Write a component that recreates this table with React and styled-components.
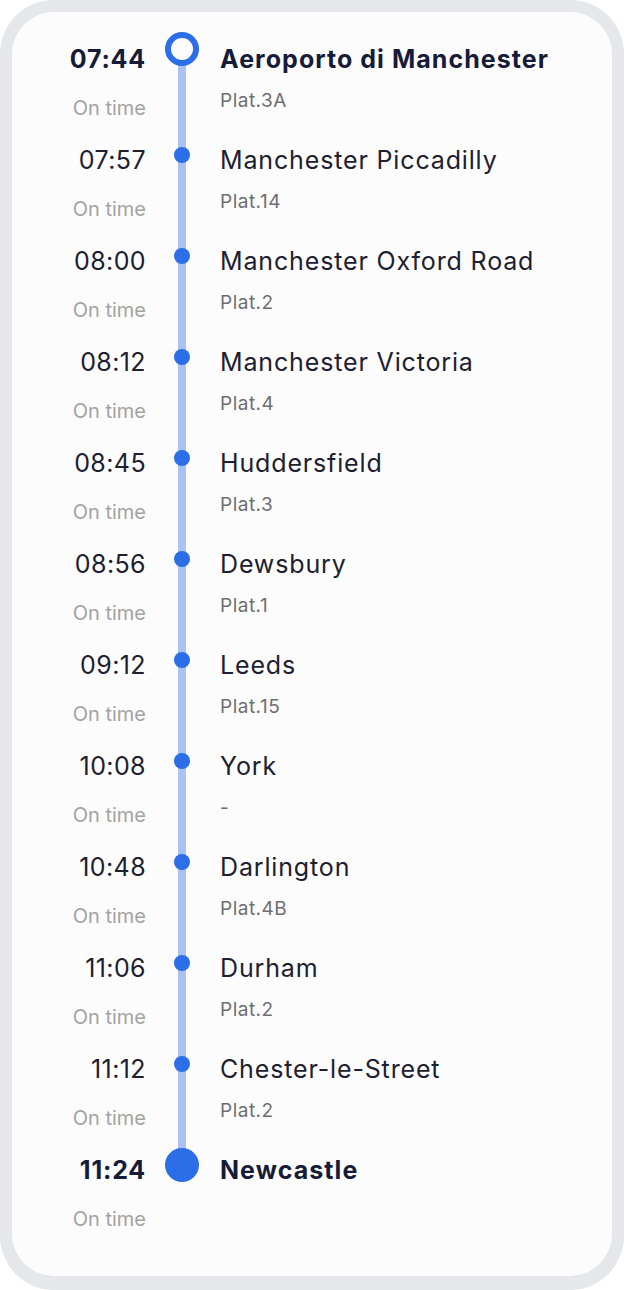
import React from 'react'
import styled, { createGlobalStyle } from 'styled-components'

const stops = [
  { time: '07:44', name: 'Aeroporto di Manchester', platform: 'Plat.3A', kind: 'origin' },
  { time: '07:57', name: 'Manchester Piccadilly', platform: 'Plat.14' },
  { time: '08:00', name: 'Manchester Oxford Road', platform: 'Plat.2' },
  { time: '08:12', name: 'Manchester Victoria', platform: 'Plat.4' },
  { time: '08:45', name: 'Huddersfield', platform: 'Plat.3' },
  { time: '08:56', name: 'Dewsbury', platform: 'Plat.1' },
  { time: '09:12', name: 'Leeds', platform: 'Plat.15' },
  { time: '10:08', name: 'York', platform: '-' },
  { time: '10:48', name: 'Darlington', platform: 'Plat.4B' },
  { time: '11:06', name: 'Durham', platform: 'Plat.2' },
  { time: '11:12', name: 'Chester-le-Street', platform: 'Plat.2' },
  { time: '11:24', name: 'Newcastle', platform: '', kind: 'destination' }
]

const GlobalStyle = createGlobalStyle`
  html, body {
    margin: 0;
    padding: 0;
    background: #ffffff;
  }
  body {
    font-family: Inter, "Noto Sans", sans-serif;
    -webkit-font-smoothing: antialiased;
  }
`

const Frame = styled.div`
  width: 624px;
  height: 1290px;
  box-sizing: border-box;
  padding: 12px 12px 14px;
  background: #e5e7eb;
  border-radius: 54px;
`

const Card = styled.div`
  height: 100%;
  box-sizing: border-box;
  background: #fcfcfc;
  border-radius: 42px;
  padding: 27px 0 0 40px;
`

const Row = styled.div`
  display: grid;
  grid-template-columns: 94px 72px 1fr;
  height: 101px;
`

const TimeCol = styled.div`
  display: flex;
  flex-direction: column;
  align-items: flex-end;
`

const Time = styled.div`
  height: 40px;
  line-height: 40px;
  font-size: 25px;
  font-weight: ${p => (p.$strong ? 700 : 400)};
  color: ${p => (p.$strong ? '#161b38' : '#1d2030')};
  letter-spacing: ${p => (p.$strong ? '0.8px' : '0.4px')};
`

const Status = styled.div`
  margin-top: 15px;
  line-height: 28px;
  font-size: 20px;
  color: #a3a3a3;
`

const Track = styled.div`
  position: relative;

  &::before {
    content: '';
    position: absolute;
    left: 50%;
    width: 8px;
    margin-left: -4px;
    background: #a9c2f1;
    top: ${p => (p.$kind === 'origin' ? '10px' : '0')};
    bottom: ${p => (p.$kind === 'destination' ? 'auto' : '0')};
    height: ${p => (p.$kind === 'destination' ? '15px' : 'auto')};
  }
`

const Dot = styled.div`
  position: absolute;
  left: 50%;
  top: ${p => (p.$kind === 'origin' ? '10px' : '15px')};
  width: ${p => (p.$kind ? '34px' : '16px')};
  height: ${p => (p.$kind ? '34px' : '16px')};
  box-sizing: border-box;
  border-radius: 50%;
  transform: translate(-50%, -50%);
  background: ${p => (p.$kind === 'origin' ? '#fcfcfc' : '#2c6de8')};
  border: ${p => (p.$kind === 'origin' ? '6px solid #2c6de8' : 'none')};
`

const Info = styled.div`
  display: flex;
  flex-direction: column;
  padding-left: 2px;
`

const Name = styled.div`
  height: 40px;
  line-height: 40px;
  font-size: 25px;
  font-weight: ${p => (p.$strong ? 700 : 400)};
  color: ${p => (p.$strong ? '#161b38' : '#1d2030')};
  letter-spacing: ${p => (p.$strong ? '1.05px' : '0.85px')};
  white-space: nowrap;
`

const Platform = styled.div`
  margin-top: 10px;
  line-height: 24px;
  font-size: 19px;
  letter-spacing: 0.5px;
  color: #6e6e72;
`

const Stop = ({ stop }) => {
  const strong = Boolean(stop.kind)
  return (
    <Row>
      <TimeCol>
        <Time $strong={strong}>{stop.time}</Time>
        <Status>On time</Status>
      </TimeCol>
      <Track $kind={stop.kind}>
        <Dot $kind={stop.kind} />
      </Track>
      <Info>
        <Name $strong={strong}>{stop.name}</Name>
        {stop.platform && <Platform>{stop.platform}</Platform>}
      </Info>
    </Row>
  )
}

const App = () => (
  <>
    <GlobalStyle />
    <Frame>
      <Card>
        {stops.map(stop => (
          <Stop key={stop.time} stop={stop} />
        ))}
      </Card>
    </Frame>
  </>
)

export default App
